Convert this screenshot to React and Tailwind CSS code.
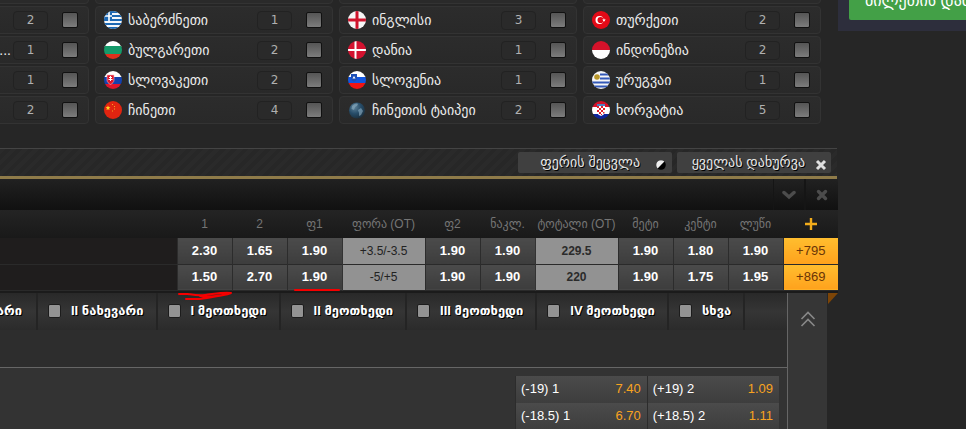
import React from "react";

const svgProps = { viewBox: "0 0 18 18", className: "h-[18px] w-[18px] rounded-full shrink-0" };

const FLAGS = {
  greece: (
    <svg {...svgProps}>
      <rect width="18" height="18" fill="#f4f7fa" />
      <path d="M0 1h18M0 5h18M0 9h18M0 13h18M0 17h18" stroke="#1c68b3" strokeWidth="2" />
      <rect width="8" height="10" fill="#1c68b3" />
      <path d="M5 0v10M0 5h8" stroke="#fff" strokeWidth="1.600" />
    </svg>
  ),
  bulgaria: (
    <svg {...svgProps}>
      <rect width="18" height="6" fill="#fff" />
      <rect y="5" width="18" height="8" fill="#159a6a" />
      <rect y="13" width="18" height="5" fill="#e02f1c" />
    </svg>
  ),
  slovakia: (
    <svg {...svgProps}>
      <rect width="18" height="6" fill="#fff" />
      <rect y="6" width="18" height="7" fill="#1341ad" />
      <rect y="13" width="18" height="5" fill="#e0152b" />
      <path d="M3 4h7v5c0 2-1.500 3.500-3.500 4.500C4.500 12.500 3 11 3 9z" fill="#e0152b" stroke="#f3b9c0" strokeWidth="0.6" />
      <path d="M6.500 5v5M5 6.500h3M4.500 8.500h4" stroke="#fff" strokeWidth="1" />
    </svg>
  ),
  china: (
    <svg {...svgProps}>
      <rect width="18" height="18" fill="#e12410" />
      <path d="M4 4.500l.7 1.500 1.700.2-1.300 1.100.4 1.700L4 8.200l-1.500.8.4-1.700-1.300-1.100 1.700-.2z" fill="#ffd426" />
      <path d="M8 3.500h1M10 5.500h1M10 8h1M8 10h1" stroke="#f7a520" strokeWidth="1" />
    </svg>
  ),
  england: (
    <svg {...svgProps}>
      <rect width="18" height="18" fill="#f6f6f6" />
      <path d="M9 0v18M0 9h18" stroke="#d0142c" strokeWidth="3" />
    </svg>
  ),
  denmark: (
    <svg {...svgProps}>
      <rect width="18" height="18" fill="#d3122f" />
      <path d="M7.500 0v18M0 9h18" stroke="#fff" strokeWidth="2" />
    </svg>
  ),
  slovenia: (
    <svg {...svgProps}>
      <rect width="18" height="6" fill="#fff" />
      <rect y="6" width="18" height="6" fill="#1256e0" />
      <rect y="12" width="18" height="6" fill="#f01414" />
      <path d="M3 3h6v4c0 2-1.500 3-3 4c-1.500-1-3-2-3-4z" fill="#1d50b8" />
      <path d="M4.500 7.500L6 5l1.500 2.500z" fill="#fff" />
    </svg>
  ),
  globe: (
    <svg {...svgProps}>
      <defs>
        <radialGradient id="globe" cx="0.35" cy="0.3" r="0.8">
          <stop offset="0" stopColor="#5d8199" />
          <stop offset="0.5" stopColor="#264c68" />
          <stop offset="1" stopColor="#1a2a36" />
        </radialGradient>
      </defs>
      <circle cx="9" cy="9.500" r="8" fill="url(#globe)" />
      <path d="M4 5c2-2 4-3 6-2L9 5 7 6 6 9 3.500 8zM10 9l3-2 2 3-2 4-2 1v-3z" fill="#8fb0c4" opacity="0.6" />
    </svg>
  ),
  turkey: (
    <svg {...svgProps}>
      <rect width="18" height="18" fill="#e30a17" />
      <circle cx="7.500" cy="9" r="4" fill="#fff" />
      <circle cx="8.600" cy="9" r="3.100" fill="#e30a17" />
      <path d="M12 7.200l.5 1.200 1.300.1-1 .9.300 1.200-1.100-.7-1.100.7.3-1.200-1-.9 1.300-.1z" fill="#fff" />
    </svg>
  ),
  indonesia: (
    <svg {...svgProps}>
      <rect width="18" height="9" fill="#d5122a" />
      <rect y="9" width="18" height="9" fill="#fff" />
    </svg>
  ),
  uruguay: (
    <svg {...svgProps}>
      <rect width="18" height="18" fill="#f6f6f6" />
      <path d="M8 3.500h10M8 7.500h10M0 11.500h18M0 15.500h18" stroke="#3358b8" strokeWidth="2" />
      <circle cx="5" cy="6" r="2.800" fill="#b8962a" />
    </svg>
  ),
  croatia: (
    <svg {...svgProps}>
      <rect width="18" height="6" fill="#d5122a" />
      <rect y="6" width="18" height="7" fill="#fff" />
      <rect y="13" width="18" height="5" fill="#10269c" />
      <path d="M5 5h8v6c0 2-2 3-4 4c-2-1-4-2-4-4z" fill="#fff" />
      <path d="M5 5h2v2H5zM9 5h2v2H9zM7 7h2v2H7zM11 7h2v2h-2zM5 9h2v2H5zM9 9h2v2H9zM7 11h2v2H7zM11 11h1.500v1.500H11zM9 13h1v1H9z" fill="#e0202c" />
      <path d="M5 3h8v2H5z" fill="#4d7fc0" />
    </svg>
  ),
};

const COUNTRIES = [
  [
    { name: "", count: 2 },
    { name: "...", count: 1 },
    { name: "", count: 1 },
    { name: "", count: 2 },
  ],
  [
    { name: "საბერძნეთი", count: 1, flag: "greece" },
    { name: "ბულგარეთი", count: 2, flag: "bulgaria" },
    { name: "სლოვაკეთი", count: 2, flag: "slovakia" },
    { name: "ჩინეთი", count: 4, flag: "china" },
  ],
  [
    { name: "ინგლისი", count: 3, flag: "england" },
    { name: "დანია", count: 1, flag: "denmark" },
    { name: "სლოვენია", count: 1, flag: "slovenia" },
    { name: "ჩინეთის ტაიპეი", count: 2, flag: "globe" },
  ],
  [
    { name: "თურქეთი", count: 2, flag: "turkey" },
    { name: "ინდონეზია", count: 2, flag: "indonesia" },
    { name: "ურუგვაი", count: 1, flag: "uruguay" },
    { name: "ხორვატია", count: 5, flag: "croatia" },
  ],
];

const COLUMNS = [
  { title: "1" },
  { title: "2" },
  { title: "ფ1" },
  { title: "ფორა (OT)", wide: true },
  { title: "ფ2" },
  { title: "ნაკლ." },
  { title: "ტოტალი (OT)", wide: true },
  { title: "მეტი" },
  { title: "კენტი" },
  { title: "ლუწი" },
];

const ROWS = [
  { odds: ["2.30", "1.65", "1.90", "+3.5/-3.5", "1.90", "1.90", "229.5", "1.90", "1.80", "1.90"], more: "+795" },
  { odds: ["1.50", "2.70", "1.90", "-5/+5", "1.90", "1.90", "220", "1.90", "1.75", "1.95"], more: "+869" },
];

const TABS = ["II ნახევარი", "I მეოთხედი", "II მეოთხედი", "III მეოთხედი", "IV მეოთხედი", "სხვა"];

const HANDICAPS = [
  ["(-19) 1", "7.40", "(+19) 2", "1.09"],
  ["(-18.5) 1", "6.70", "(+18.5) 2", "1.11"],
];

const CountryCard = ({ item }) => (
  <label className="flex h-7 items-center rounded-sm border border-[#333] bg-linear-to-b from-[#2c2c2c] to-[#292929] pl-2 pr-2.5">
    {item.flag ? FLAGS[item.flag] : null}
    <span className="min-w-0 flex-1 truncate pl-1.5 text-[14px] text-[#ececec]">
      {item.flag ? item.name : <span className="block pr-0.5 text-right">{item.name}</span>}
    </span>
    <span className="mr-3.5 h-[19px] w-[35px] rounded-sm border border-[#222] bg-[#2a2a2a] text-center font-['DejaVu_Sans',sans-serif] text-[12px] leading-[17px] text-[#b0b0b0]">
      {item.count}
    </span>
    <input
      type="checkbox"
      className="h-4 w-4 appearance-none rounded-xs border border-[#111] bg-linear-to-b from-[#555] to-[#7d7d7d]"
    />
  </label>
);

const CountryGrid = () => (
  <div className="-mt-6 -ml-[149px] mr-[17px] grid shrink-0 grid-cols-4 gap-x-1.5 pb-6">
    {COUNTRIES.map((list, index) => (
      <div key={index} className="flex min-w-0 flex-col gap-0.5">
        <div className="h-7 rounded-sm border border-[#333] bg-[#2a2a2a]"></div>
        {list.map((item, i) => (
          <CountryCard key={i} item={item} />
        ))}
      </div>
    ))}
  </div>
);

const Toolbar = () => (
  <div className="mr-px flex h-[31px] shrink-0 items-center justify-end gap-[5px] border-t border-b-3 border-t-[#444] border-b-[#8f7b49] bg-[repeating-linear-gradient(135deg,#2a2a2a_0px,#2a2a2a_4px,#272727_4px,#272727_8px)] pr-1.5">
    <button className="flex h-[21px] w-[154px] items-center justify-end rounded-xs bg-[#404040] pr-1.5 text-[14px] whitespace-nowrap text-[#e6e6e6] [text-shadow:1px_1px_0_#000]">
      ფერის შეცვლა
      <svg viewBox="0 0 10 10" className="mt-1 ml-4 h-2.5 w-2.5">
        <circle cx="5" cy="5" r="4.800" fill="#000" />
        <path d="M8.400 1.600A4.800 4.800 0 0 0 1.600 8.400z" fill="#eee" />
      </svg>
    </button>
    <button className="flex h-[21px] w-[154px] items-center justify-end rounded-xs bg-[#404040] pr-1 text-[14px] whitespace-nowrap text-[#e6e6e6] [text-shadow:1px_1px_0_#000]">
      ყველას დახურვა
      <svg viewBox="0 0 12 12" className="mt-1 ml-2.5 h-3 w-3">
        <path d="M2 2l8 8M10 2l-8 8" stroke="#e0e0e0" strokeWidth="3" />
      </svg>
    </button>
  </div>
);

const TitleBar = () => (
  <div className="flex h-[31px] shrink-0 justify-end bg-linear-to-b from-[#212121] to-[#111]">
    <button aria-label="Collapse" className="flex w-8 items-center justify-center border-x border-[#151515]">
      <svg viewBox="0 0 14 10" className="h-2.5 w-3.5">
        <path d="M2 2.500l5 4.500 5-4.500" fill="none" stroke="#4c4c4c" strokeWidth="3.500" strokeLinecap="round" />
      </svg>
    </button>
    <button aria-label="Close" className="flex w-[33px] items-center justify-center border-l border-[#151515]">
      <svg viewBox="0 0 12 12" className="h-3 w-3">
        <path d="M2.500 2.500l7 7M9.500 2.500l-7 7" stroke="#4c4c4c" strokeWidth="3.400" strokeLinecap="round" />
      </svg>
    </button>
  </div>
);

const cellStyle = (i) => {
  if (i === 3) return "border-l border-[#333] bg-[#929292] p-0 text-center text-[12px] text-[#222]";
  if (i === 6) return "border-l border-[#333] bg-[#929292] p-0 text-center text-[12px] font-bold text-[#2b2b2b]";
  return "border-l border-[#2c2c2c] bg-linear-to-b from-[#4b4b4b] to-[#3d3d3d] p-0 text-center text-[13px] font-bold text-white";
};

const OddsTable = () => (
  <div className="relative shrink-0">
    <table className="w-full table-fixed border-collapse">
      <thead>
        <tr className="h-7 bg-linear-to-b from-[#242424] to-[#191919] text-[12px] text-[#757575]">
          <th></th>
          {COLUMNS.map((col) => (
            <th key={col.title} className={col.wide ? "w-[83px] p-0 font-normal whitespace-nowrap" : "w-[55px] p-0 font-normal"}>
              {col.title}
            </th>
          ))}
          <th className="w-[55px] p-0">
            <svg viewBox="0 0 14 14" className="mx-auto h-3.5 w-3.5">
              <path d="M7 1v12M1 7h12" stroke="#f2ac1b" strokeWidth="2.400" />
            </svg>
          </th>
        </tr>
      </thead>
      <tbody>
        {ROWS.map((row) => (
          <tr key={row.more} className="h-[26px] border-b border-[#2a2a2a] bg-[#1f1d1d]">
            <td></td>
            {row.odds.map((value, i) => (
              <td key={i} className={cellStyle(i)}>
                {value}
              </td>
            ))}
            <td className="border-l border-[#2c2c2c] bg-linear-to-b from-[#ffbd2e] to-[#ffa21c] p-0 text-center text-[13px] text-[#6a3506]">
              {row.more}
            </td>
          </tr>
        ))}
      </tbody>
    </table>
    <svg viewBox="0 0 170 12" className="pointer-events-none absolute right-[492px] -bottom-2.5 h-3 w-[170px]">
      <path d="M3 5h9c6 1 10 2 17 1c9-1 18-3 26-2M10 10h11c8 0 14-2 21-3c5-1 9-1 13-3M24 7c9 2 18 0 27-2" fill="none" stroke="#f50000" strokeWidth="2" strokeLinecap="round" />
      <path d="M119 1h44" stroke="#f50000" strokeWidth="2" strokeLinecap="round" />
    </svg>
  </div>
);

const Tab = ({ title }) => (
  <label className="flex items-center gap-2.5 border-l-2 border-[#242424] pr-3 pl-2.5 whitespace-nowrap">
    <input type="checkbox" className="h-3.5 w-[13px] appearance-none rounded-xs border border-[#1c1c1c] bg-[#939393]" />
    {title}
  </label>
);

const Details = () => (
  <div className="flex flex-1 border-t-2 border-[#1b1b1b]">
    <div className="flex min-w-0 flex-1 flex-col bg-[#333]">
      <div className="h-[75px] shrink-0 border-b border-[#666] bg-[#2d2d2d]">
        <div className="flex h-[37px] overflow-hidden bg-linear-to-b from-[#292929] via-[#353535] to-[#2b2b2b] text-[13px] font-bold text-white [text-shadow:1px_1px_0_#000]">
          <span className="flex w-9 shrink-0 items-center justify-end pr-3.5 whitespace-nowrap">ვარი</span>
          {TABS.map((title) => (
            <Tab key={title} title={title} />
          ))}
          <span className="flex-1 border-l-2 border-[#242424]"></span>
        </div>
      </div>
      <table className="mt-2 mr-2 w-[264px] self-end text-[13px] text-white">
        <tbody>
          {HANDICAPS.map((row) => (
            <tr key={row[0]} className="h-[27px] bg-linear-to-b from-[#4b4b4b] to-[#3d3d3d]">
              <td className="w-20 border-l border-[#2c2c2c] p-0 pl-[5px]">{row[0]}</td>
              <td className="w-[52px] p-0 pr-1.5 text-right text-[#f8a31f]">{row[1]}</td>
              <td className="w-20 border-l border-[#2c2c2c] p-0 pl-[5px]">{row[2]}</td>
              <td className="w-[52px] p-0 pr-1.5 text-right text-[#f8a31f]">{row[3]}</td>
            </tr>
          ))}
        </tbody>
      </table>
    </div>
    <button aria-label="Scroll up" className="flex w-10 justify-center border-l border-[#666] bg-[#363636] pt-[18px]">
      <svg viewBox="0 0 16 16" className="h-4 w-4">
        <path d="M1.500 8L8 1.500 14.500 8M1.500 15L8 8.500l6.500 6.500" fill="none" stroke="#888" strokeWidth="1.600" />
      </svg>
    </button>
    <div className="w-[11px] bg-[#262626]">
      <svg viewBox="0 0 11 11" className="h-[11px] w-[11px]">
        <path d="M1 0h10L1 11z" fill="#7d4507" />
      </svg>
    </div>
  </div>
);

const Sidebar = () => (
  <aside className="w-32 shrink-0 overflow-hidden">
    <div className="-mt-6 h-[55px] bg-[#2d2e3c] pl-[11px]">
      <button className="h-11 w-[240px] rounded-xs bg-[#43a047] pt-1.5 pl-4 text-left text-[16px] text-white">
        ბილეთის დამატება
      </button>
    </div>
  </aside>
);

const App = () => {
  return (
    <div className="flex h-screen overflow-hidden bg-[#262626] font-['Liberation_Sans','DejaVu_Sans',sans-serif]">
      <main className="flex min-w-0 flex-1 flex-col overflow-hidden">
        <CountryGrid />
        <Toolbar />
        <TitleBar />
        <OddsTable />
        <Details />
      </main>
      <Sidebar />
    </div>
  );
};

export default App;
